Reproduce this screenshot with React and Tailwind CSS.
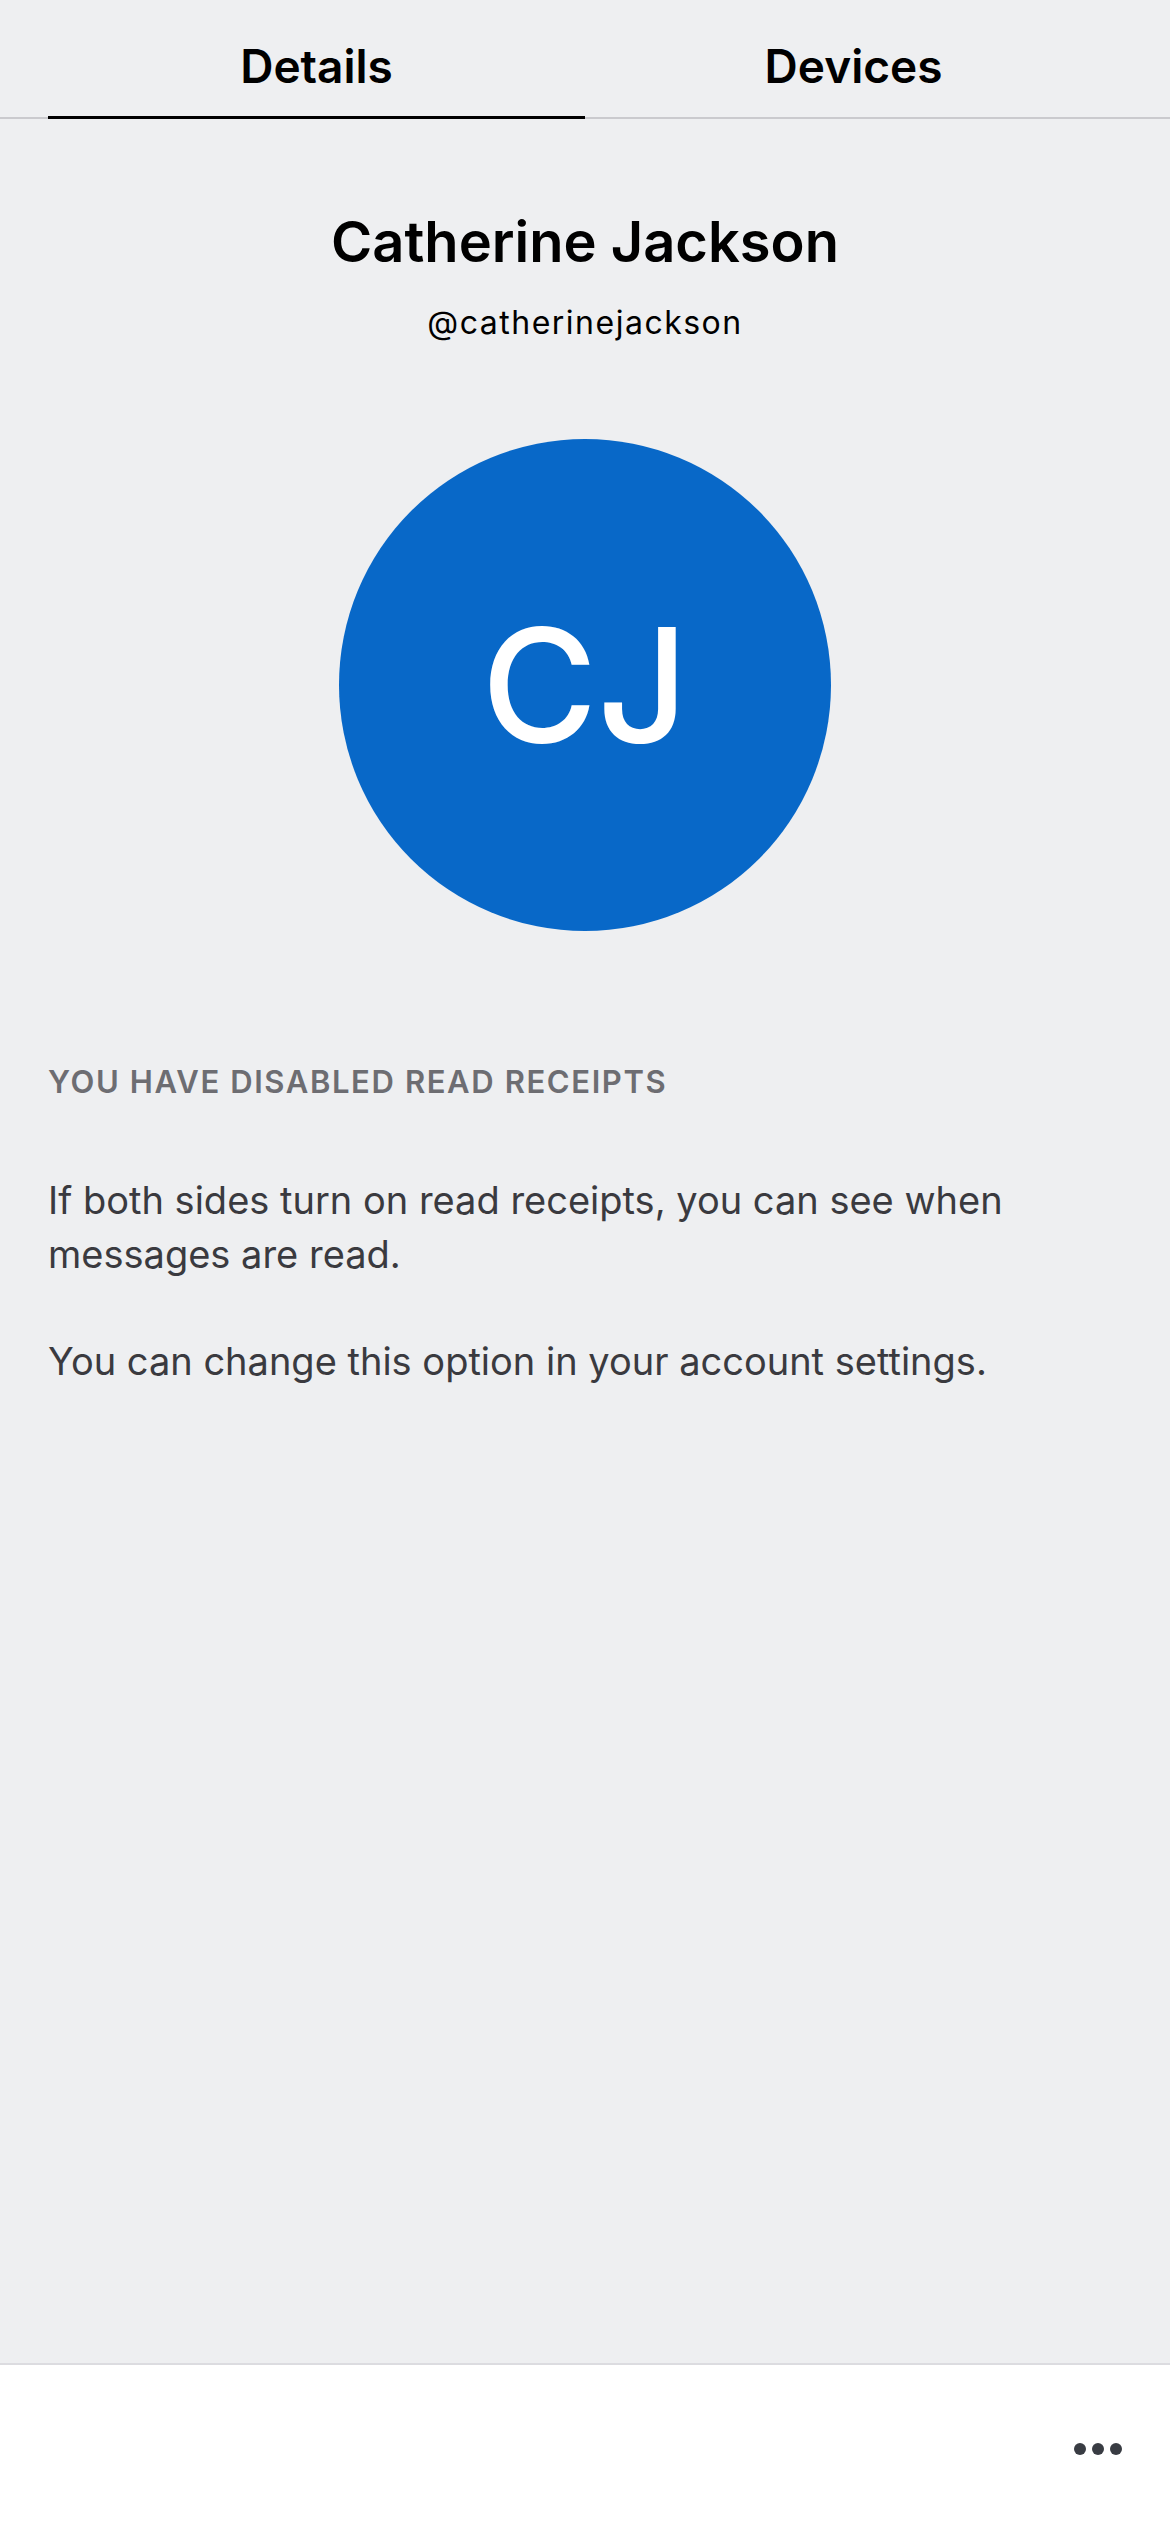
import React from 'react';

const Tab = ({ label, active }) => (
    <div
        className={`flex-1 flex justify-center pt-[43px] pb-[27px] border-b-[3px] ${active ? 'border-black' : 'border-transparent'}`}
    >
        <span className="text-[46px] leading-[46px] font-semibold text-black">{label}</span>
    </div>
);

const App = () => {
    return (
        <div className="min-h-[2532px] w-[1170px] flex flex-col bg-[#eeeff1] font-['Inter','Noto_Sans',sans-serif]">
            {/* tabs */}
            <div className="border-b-2 border-[#cacace]">
                <div className="flex px-[48px] -mb-[2px]">
                    <Tab label="Details" active />
                    <Tab label="Devices" />
                </div>
            </div>

            <div className="flex-1 flex flex-col">
                <div className="flex flex-col items-center">
                    <h1 className="mt-[95px] text-[56px] leading-[56px] font-semibold text-black">Catherine Jackson</h1>
                    <p className="mt-[37px] text-[32px] leading-[32px] tracking-[1.5px] text-black">@catherinejackson</p>
                    <div className="mt-[100px] w-[492px] h-[492px] rounded-full bg-[#0868c8] flex items-center justify-center">
                        <span className="text-[158px] leading-none font-medium text-white">CJ</span>
                    </div>
                </div>

                <div className="px-[48px]">
                    <h2 className="mt-[135px] text-[31px] leading-[31px] tracking-[1.6px] font-semibold text-[#6d6d72] uppercase">
                        You have disabled read receipts
                    </h2>
                    <p className="mt-[76px] text-[38px] leading-[54px] text-[#3a3a3f]">
                        If both sides turn on read receipts, you can see when messages are read.
                    </p>
                    <p className="mt-[53px] text-[38px] leading-[54px] text-[#3a3a3f]">
                        You can change this option in your account settings.
                    </p>
                </div>
            </div>

            {/* bottom bar */}
            <div className="h-[169px] border-t-2 border-[#dcdce0] bg-white flex items-center justify-end pr-[48px]">
                <div className="flex gap-[6px]">
                    <span className="w-[12px] h-[12px] rounded-full bg-[#393c43]" />
                    <span className="w-[12px] h-[12px] rounded-full bg-[#393c43]" />
                    <span className="w-[12px] h-[12px] rounded-full bg-[#393c43]" />
                </div>
            </div>
        </div>
    );
};

export default App;
